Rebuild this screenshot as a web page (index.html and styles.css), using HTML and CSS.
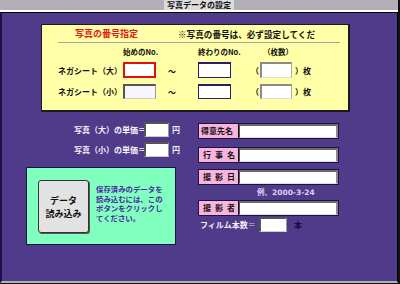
FILE: index.html
```html
<!DOCTYPE html>
<html lang="ja">
<head>
    <meta charset="UTF-8">
    <title>写真データの設定</title>
    <link rel="stylesheet" href="styles.css">
</head>
<body>
    <div class="window">
        <div class="titlebar"><span class="title">写真データの設定</span></div>

        <div class="pane">
            <!-- photo number block -->
            <section class="numbers">
                <div class="numbers-head">
                    <span class="numbers-title">写真の番号指定</span>
                    <span class="numbers-note">※写真の番号は、必ず設定してくだ</span>
                </div>
                <div class="numbers-grid">
                    <span></span>
                    <span class="col-head">始めのNo.</span>
                    <span></span>
                    <span class="col-head">終わりのNo.</span>
                    <span></span>
                    <span class="col-head count-head">（枚数）</span>
                    <span></span>

                    <span class="row-label">ネガシート（大）</span>
                    <input type="text" class="field start active">
                    <span class="tilde">〜</span>
                    <input type="text" class="field end">
                    <span class="paren">（</span>
                    <input type="text" class="field count">
                    <span class="suffix">）枚</span>

                    <span class="row-label">ネガシート（小）</span>
                    <input type="text" class="field start">
                    <span class="tilde">〜</span>
                    <input type="text" class="field end">
                    <span class="paren">（</span>
                    <input type="text" class="field count">
                    <span class="suffix">）枚</span>
                </div>
            </section>

            <div class="lower">
                <div class="left-col">
                    <div class="price-row">
                        <span class="price-label">写真（大）の単価＝</span>
                        <input type="text" class="field price">
                        <span class="unit">円</span>
                    </div>
                    <div class="price-row">
                        <span class="price-label">写真（小）の単価＝</span>
                        <input type="text" class="field price">
                        <span class="unit">円</span>
                    </div>

                    <div class="load-panel">
                        <button type="button" class="load-btn"><span>データ</span><span>読み込み</span></button>
                        <p class="load-text">保存済みのデータを<br>読み込むには、この<br>ボタンをクリックし<br>てください。</p>
                    </div>
                </div>

                <div class="right-col">
                    <div class="entry">
                        <span class="entry-label">得意先名</span>
                        <input type="text" class="entry-input">
                    </div>
                    <div class="entry gap-sm">
                        <span class="entry-label spaced">行事名</span>
                        <input type="text" class="entry-input">
                    </div>
                    <div class="entry gap-xs">
                        <span class="entry-label spaced">撮影日</span>
                        <input type="text" class="entry-input">
                    </div>
                    <div class="date-hint">例、2000-3-24</div>
                    <div class="entry">
                        <span class="entry-label spaced">撮影者</span>
                        <input type="text" class="entry-input">
                    </div>
                    <div class="film-row">
                        <span class="film-label">フィルム本数<span class="eq">＝</span></span>
                        <input type="text" class="field film">
                        <span class="film-unit">本</span>
                    </div>
                </div>
            </div>
        </div>
    </div>
</body>
</html>
```

FILE: styles.css
```css
html, body {
    margin: 0;
    width: 400px;
    height: 284px;
    overflow: hidden;
    background-color: #111;
}
body {
    font-family: "Noto Sans CJK JP", "DejaVu Sans", sans-serif;
    font-weight: bold;
}
.window {
    height: 283px;
    width: 398px;
    display: flex;
    flex-direction: column;
    background-color: #b2b0b6;
}
.titlebar {
    height: 10px;
    line-height: 10px;
    text-align: center;
    font-size: 8px;
    color: #111;
    background-color: #b2b0b6;
    border-bottom: 2px solid #fff;
}
.title {
    background-color: #dcdcdc;
    padding: 0 3px;
}
.pane {
    flex: 1;
    background-color: #503a8a;
    border-top: 1px solid #000;
    border-left: 2px solid #1c1048;
    border-bottom: 2px solid #b2b0b6;
    border-right: 1px solid #000;
}

/* number block */
.numbers {
    box-sizing: border-box;
    margin: 11px 0 0 39px;
    width: 309px;
    height: 88px;
    background-color: #ffffa8;
    border: 1px solid #1a1a1a;
    border-right-width: 2px;
    border-bottom-width: 2px;
    padding: 0 8px 0 16px;
}
.numbers-head {
    display: flex;
    align-items: center;
    height: 17px;
    border-bottom: 1px solid #a4a4a4;
    font-size: 9px;
    white-space: nowrap;
    overflow: hidden;
}
.numbers-title {
    color: #e01818;
    width: 103px;
    padding-left: 17px;
    flex-shrink: 0;
}
.numbers-note {
    color: #111;
    font-size: 8.6px;
}
.numbers-grid {
    display: grid;
    grid-template-columns: 65px 33px 42px 33px 29px 32px auto;
    grid-template-rows: 10px 16px 15px;
    row-gap: 6px;
    margin-top: 3px;
    font-size: 8px;
    color: #111;
    align-items: center;
}
.col-head {
    font-size: 7.5px;
    white-space: nowrap;
}
.count-head {
    padding-left: 3px;
}
.row-label {
    white-space: nowrap;
}
.tilde {
    padding-left: 12px;
}
.paren {
    text-align: right;
    padding-right: 1px;
}
.suffix {
    padding-left: 3px;
    white-space: nowrap;
}

.field {
    box-sizing: border-box;
    margin: 0;
    padding: 0;
    height: 100%;
    width: 100%;
    min-width: 0;
    background-color: #fff;
    border: 1px solid #666;
    border-top: 2px solid #555;
    border-left: 2px solid #555;
    border-right-color: #999;
    border-bottom-color: #ccc;
    outline: none;
}
.field.start {
    background-color: #f6f4fc;
}
.field.active {
    border: 2px solid #e01010;
    background-color: #fff;
}
.field.end {
    border: 1px solid #2a1e62;
    border-top-width: 2px;
}
.field.count {
    border-color: #8a8a8a;
    border-right-color: #aaa;
    border-bottom-color: #ddd;
}

/* lower half */
.lower {
    display: flex;
    padding: 10px 0 0 24px;
}
.left-col {
    width: 150px;
}
.price-row {
    display: flex;
    align-items: center;
    height: 15px;
    margin-bottom: 5px;
    font-size: 8px;
    color: #f2f0f8;
}
.price-label {
    width: 70px;
    margin-left: 48px;
    white-space: nowrap;
}
.field.price {
    width: 25px;
    flex-shrink: 0;
}
.unit {
    padding-left: 3px;
}

.load-panel {
    box-sizing: border-box;
    margin-top: 10px;
    width: 150px;
    height: 78px;
    background-color: #80ffbf;
    border: 1px solid #1c1048;
    display: flex;
    align-items: flex-start;
    padding: 12px 0 0 11px;
}
.load-btn {
    box-sizing: border-box;
    width: 51px;
    height: 53px;
    padding: 0;
    flex-shrink: 0;
    display: flex;
    flex-direction: column;
    align-items: center;
    justify-content: center;
    background-color: #e2e2e2;
    border: 1px solid #333;
    border-radius: 3px;
    box-shadow: 1px 1px 0 #555;
    font-family: inherit;
    font-weight: bold;
    font-size: 9px;
    line-height: 13px;
    color: #111;
}
.load-text {
    margin: 4px 0 0 7px;
    font-size: 7.4px;
    line-height: 9.6px;
    color: #4a2aa0;
    white-space: nowrap;
}

.right-col {
    margin-left: 22px;
    padding-top: 1px;
}
.entry {
    display: flex;
    height: 16px;
    border: 1px solid #1c1048;
    box-sizing: border-box;
    width: 141px;
}
.gap-sm { margin-top: 8px; }
.gap-xs { margin-top: 6px; }
.entry-label {
    box-sizing: border-box;
    width: 40px;
    flex-shrink: 0;
    background-color: #f8b4dc;
    border-right: 1px solid #111;
    font-size: 8px;
    line-height: 14px;
    color: #111;
    padding-left: 2px;
    white-space: nowrap;
}
.entry-label.spaced {
    letter-spacing: 4px;
    padding-left: 4px;
}
.entry-input {
    box-sizing: border-box;
    flex: 1;
    width: 0;
    min-width: 0;
    margin: 0;
    padding: 0;
    height: 100%;
    background-color: #fff;
    border: none;
    border-top: 2px solid #6a6a6a;
    border-left: 1px solid #555;
    border-right: 2px solid #8a8a8a;
    border-bottom: 1px solid #ddd;
    outline: none;
}
.date-hint {
    height: 15px;
    line-height: 16px;
    padding-left: 59px;
    font-size: 7.5px;
    color: #d8d2f2;
    font-family: "DejaVu Sans", "Noto Sans CJK JP", sans-serif;
}
.film-row {
    display: flex;
    align-items: center;
    height: 15px;
    margin-top: 1px;
    font-size: 8px;
    color: #f2f0f8;
}
.film-label {
    width: 59px;
    padding-left: 2px;
    white-space: nowrap;
}
.eq {
    color: #a8a4bc;
}
.field.film {
    width: 28px;
    flex-shrink: 0;
}
.film-unit {
    padding-left: 7px;
    color: #140c40;
}
```
